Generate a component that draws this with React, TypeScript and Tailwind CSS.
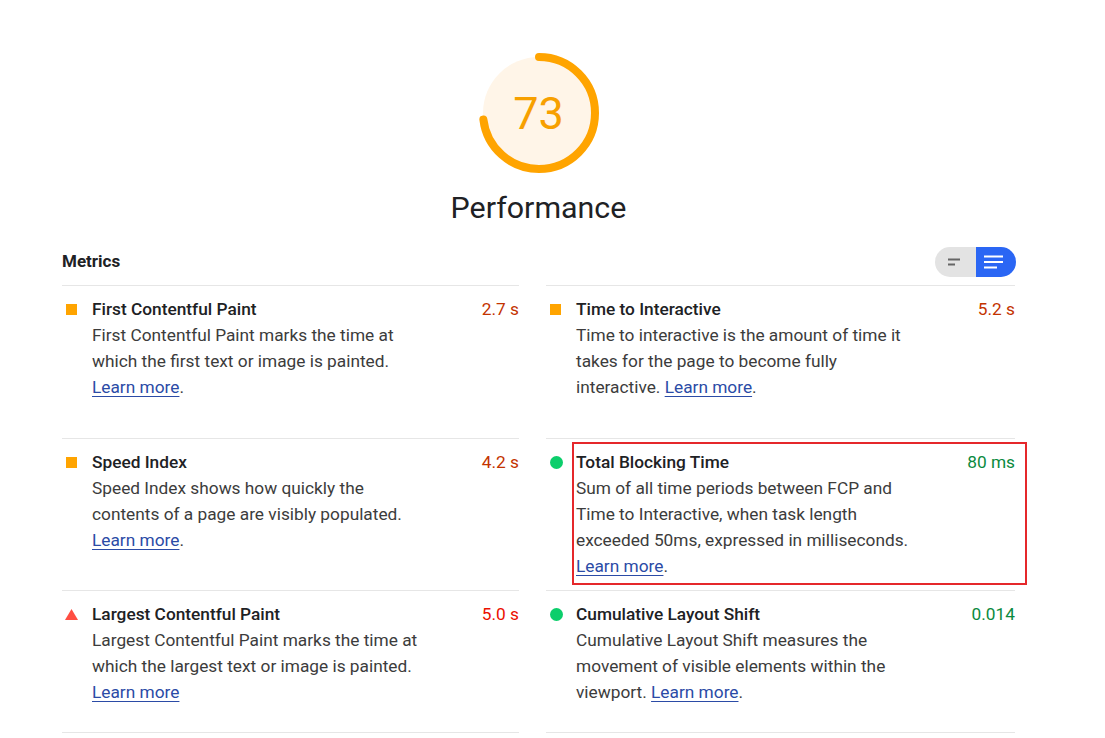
import React from "react";

type Status = "avg" | "fail" | "pass";

type Metric = {
  title: string;
  value: string;
  status: Status;
  lines: React.ReactNode[];
  height: string;
  highlight?: boolean;
  last?: boolean;
};

const Link = ({ dot = true }: { dot?: boolean }) => (
  <>
    <a className="text-[#2b4ba6] underline underline-offset-[3px] decoration-[1px]" href="#">
      Learn more
    </a>
    {dot ? "." : null}
  </>
);

function StatusIcon({ status }: { status: Status }) {
  if (status === "avg") {
    return <span className="block w-[11px] h-[11px] bg-[#ffa400] ml-[4px]" />;
  }
  if (status === "pass") {
    return <span className="block w-[13px] h-[13px] rounded-full bg-[#0cce6b] ml-[4px]" />;
  }
  return (
    <svg width="13" height="11" viewBox="0 0 13 11" className="ml-[3px]">
      <polygon points="6.5,0 13,11 0,11" fill="#ff4e42" />
    </svg>
  );
}

function MetricCell({ m }: { m: Metric }) {
  const valueColor =
    m.status === "avg" ? "text-[#c33300]" : m.status === "fail" ? "text-[#eb0f00]" : "text-[#0b8a3e]";
  return (
    <div
      className={`relative border-t border-[#e6e6e6] pt-[10px] ${m.height} ${
        m.last ? "border-b" : ""
      }`}
    >
      <div className="flex">
        <div className="w-[30px] h-[26px] flex items-center">
          <StatusIcon status={m.status} />
        </div>
        <div className="flex-1">
          <div className="flex justify-between text-[17.3px] leading-[26px]">
            <span className="font-medium text-[#202124]">{m.title}</span>
            <span className={valueColor}>{m.value}</span>
          </div>
          <div className="text-[17.3px] leading-[26px] text-[#3c3c3c]">
            {m.lines.map((l, i) => (
              <div key={i} className="whitespace-nowrap">
                {l}
              </div>
            ))}
          </div>
        </div>
      </div>
      {m.highlight ? (
        <div className="absolute top-[3px] left-[26px] right-[-12px] bottom-[5px] border-2 border-[#e5282b]" />
      ) : null}
    </div>
  );
}

export default function App() {
  const C = 2 * Math.PI * 56;
  const arc = C * 0.73;

  const rows: [Metric, Metric][] = [
    [
      {
        title: "First Contentful Paint",
        value: "2.7 s",
        status: "avg",
        height: "h-[153px]",
        lines: [
          "First Contentful Paint marks the time at",
          "which the first text or image is painted.",
          <Link />,
        ],
      },
      {
        title: "Time to Interactive",
        value: "5.2 s",
        status: "avg",
        height: "h-[153px]",
        lines: [
          "Time to interactive is the amount of time it",
          "takes for the page to become fully",
          <>
            interactive. <Link />
          </>,
        ],
      },
    ],
    [
      {
        title: "Speed Index",
        value: "4.2 s",
        status: "avg",
        height: "h-[152px]",
        lines: ["Speed Index shows how quickly the", "contents of a page are visibly populated.", <Link />],
      },
      {
        title: "Total Blocking Time",
        value: "80 ms",
        status: "pass",
        height: "h-[152px]",
        highlight: true,
        lines: [
          "Sum of all time periods between FCP and",
          "Time to Interactive, when task length",
          "exceeded 50ms, expressed in milliseconds.",
          <Link />,
        ],
      },
    ],
    [
      {
        title: "Largest Contentful Paint",
        value: "5.0 s",
        status: "fail",
        height: "h-[143px]",
        last: true,
        lines: [
          "Largest Contentful Paint marks the time at",
          "which the largest text or image is painted.",
          <Link dot={false} />,
        ],
      },
      {
        title: "Cumulative Layout Shift",
        value: "0.014",
        status: "pass",
        height: "h-[143px]",
        last: true,
        lines: [
          "Cumulative Layout Shift measures the",
          "movement of visible elements within the",
          <>
            viewport. <Link />
          </>,
        ],
      },
    ],
  ];

  return (
    <div className="w-[1105px] h-[738px] bg-white overflow-hidden font-['Roboto','Liberation_Sans',sans-serif]">
      <div className="ml-[62px] w-[953px] pt-[53px]">
        <div className="flex flex-col items-center">
          <div className="relative w-[120px] h-[120px]">
            <svg width="120" height="120" viewBox="0 0 120 120">
              <circle cx="60" cy="60" r="56" fill="#fff5e8" />
              <circle
                cx="60"
                cy="60"
                r="56"
                fill="none"
                stroke="#ffa400"
                strokeWidth="8"
                strokeLinecap="round"
                strokeDasharray={`${arc} ${C}`}
                transform="rotate(-90 60 60)"
              />
            </svg>
            <div className="absolute inset-0 flex items-center justify-center text-[45px] leading-none text-[#f7a000]">
              73
            </div>
          </div>
          <div className="mt-[17px] text-[30.4px] leading-[36px] text-[#202124]">Performance</div>
        </div>

        <div className="mt-[21px] h-[30px] flex items-center justify-between">
          <div className="text-[17px] font-bold text-[#202124]">Metrics</div>
          <div className="flex h-[30px] w-[81px] rounded-full overflow-hidden mr-[-1px]">
            <div className="w-[41px] bg-[#e3e3e3] flex items-center pl-[13px]">
              <svg width="14" height="8" viewBox="0 0 14 8">
                <rect x="0" y="0.5" width="12" height="2" fill="#666" />
                <rect x="0" y="5.5" width="7" height="2" fill="#666" />
              </svg>
            </div>
            <div className="w-[40px] bg-[#2a66f4] flex items-center pl-[8px]">
              <svg width="20" height="14" viewBox="0 0 20 14">
                <rect x="0" y="0.5" width="19" height="2" fill="#fff" />
                <rect x="0" y="6" width="19" height="2" fill="#fff" />
                <rect x="0" y="11.5" width="13" height="2" fill="#fff" />
              </svg>
            </div>
          </div>
        </div>

        <div className="mt-[8px] grid grid-cols-[457px_469px] gap-x-[27px]">
          {rows.map((r, i) => (
            <React.Fragment key={i}>
              <MetricCell m={r[0]} />
              <MetricCell m={r[1]} />
            </React.Fragment>
          ))}
        </div>
      </div>
    </div>
  );
}
